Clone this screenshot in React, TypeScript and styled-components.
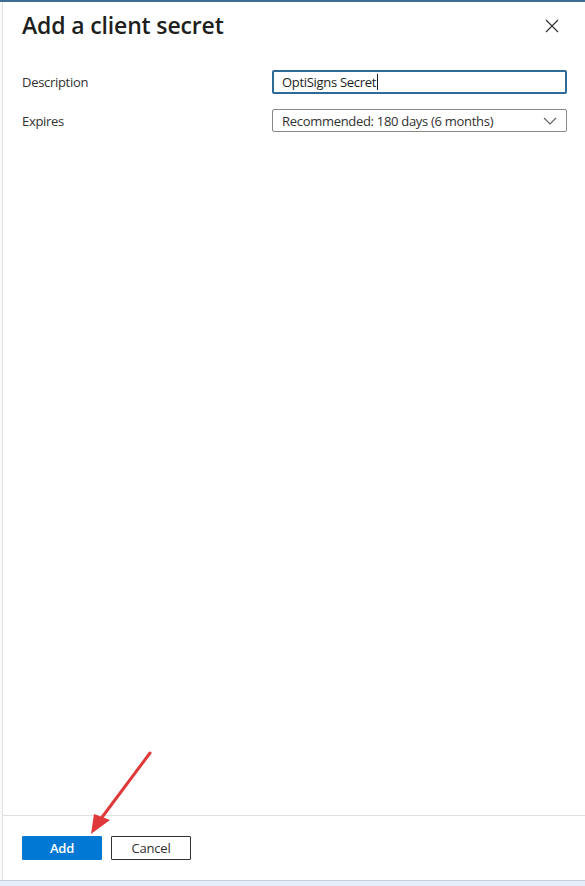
import React from "react";
import styled, { createGlobalStyle } from "styled-components";

const Global = createGlobalStyle`
  html, body { margin: 0; padding: 0; background: #ffffff; }
  body { font-family: "Open Sans", "Noto Sans", sans-serif; color: #323130; }
  * { box-sizing: border-box; }
`;

const Page = styled.div`
  width: 585px;
  height: 886px;
  display: flex;
  flex-direction: column;
  border-top: 2px solid #3b6f93;
  background: #fafafa;
  position: relative;
  overflow: hidden;
`;

const Panel = styled.div`
  flex: 1;
  display: flex;
  flex-direction: column;
  margin-left: 2px;
  border-left: 1px solid #e3e3e3;
  background: #ffffff;
`;

const Header = styled.div`
  display: flex;
  align-items: flex-start;
  justify-content: space-between;
  padding: 7px 26px 0 19px;
  height: 66px;
`;

const Title = styled.h1`
  margin: 0;
  font-size: 23px;
  font-weight: 600;
  color: #201f1e;
  letter-spacing: -0.15px;
`;

const CloseButton = styled.button`
  border: none;
  background: transparent;
  padding: 0;
  margin-top: 10px;
  width: 14px;
  height: 14px;
  display: flex;
  color: #323130;
`;

const Form = styled.div`
  display: flex;
  flex-direction: column;
  gap: 15px;
  padding: 2px 18px 0 19px;
`;

const Row = styled.div`
  display: grid;
  grid-template-columns: 250px 1fr;
  align-items: center;
`;

const Label = styled.label`
  font-size: 13px;
  letter-spacing: -0.3px;
  color: #323130;
`;

const TextInput = styled.div`
  height: 24px;
  border: 2px solid #2d6a97;
  border-radius: 2px;
  padding: 0 8px;
  display: flex;
  align-items: center;
  font-size: 13px;
  letter-spacing: -0.3px;
  color: #201f1e;
`;

const Caret = styled.span`
  display: inline-block;
  width: 1px;
  height: 16px;
  background: #201f1e;
  margin-left: 1px;
`;

const Select = styled.div`
  height: 23px;
  border: 1px solid #8a8886;
  border-radius: 2px;
  padding: 0 9px;
  display: flex;
  align-items: center;
  justify-content: space-between;
  font-size: 13px;
  letter-spacing: -0.3px;
  color: #323130;
`;

const Spacer = styled.div`
  flex: 1;
`;

const Footer = styled.div`
  border-top: 1px solid #e1dfdd;
  height: 65px;
  display: flex;
  align-items: flex-start;
  gap: 9px;
  padding: 20px 19px 0;
`;

const Button = styled.button<{ $primary?: boolean }>`
  width: 80px;
  height: 24px;
  border-radius: 1px;
  font-family: "Open Sans", "Noto Sans", sans-serif;
  font-size: 13px;
  letter-spacing: -0.2px;
  font-weight: ${(p) => (p.$primary ? 600 : 400)};
  padding: 0;
  background: ${(p) => (p.$primary ? "#0078d4" : "#ffffff")};
  color: ${(p) => (p.$primary ? "#ffffff" : "#323130")};
  border: 1px solid ${(p) => (p.$primary ? "#0078d4" : "#323130")};
`;

const BottomStrip = styled.div`
  height: 6px;
  border-top: 1px solid #c8cfd9;
  background: #e6eefa;
`;

const ArrowLayer = styled.svg`
  position: absolute;
  left: 0;
  top: 0;
  pointer-events: none;
`;

export default function App() {
  return (
    <>
      <Global />
      <Page>
        <Panel>
          <Header>
            <Title>Add a client secret</Title>
            <CloseButton aria-label="Close">
              <svg width="14" height="14" viewBox="0 0 14 14">
                <path d="M1 1 L13 13 M13 1 L1 13" stroke="#323130" strokeWidth="1.2" />
              </svg>
            </CloseButton>
          </Header>
          <Form>
            <Row>
              <Label>Description</Label>
              <TextInput>
                OptiSigns Secret
                <Caret />
              </TextInput>
            </Row>
            <Row>
              <Label>Expires</Label>
              <Select>
                <span>Recommended: 180 days (6 months)</span>
                <svg width="14" height="8" viewBox="0 0 14 8">
                  <path d="M1 1 L7 7 L13 1" fill="none" stroke="#605e5c" strokeWidth="1.1" />
                </svg>
              </Select>
            </Row>
          </Form>
          <Spacer />
          <Footer>
            <Button $primary>Add</Button>
            <Button>Cancel</Button>
          </Footer>
        </Panel>
        <BottomStrip />
        <ArrowLayer width="585" height="886" viewBox="0 0 585 886">
          <line x1="150" y1="751" x2="100" y2="818" stroke="#e0393a" strokeWidth="3" strokeLinecap="round" />
          <polygon points="91,832 94,812 110,818" fill="#e0393a" />
        </ArrowLayer>
      </Page>
    </>
  );
}
